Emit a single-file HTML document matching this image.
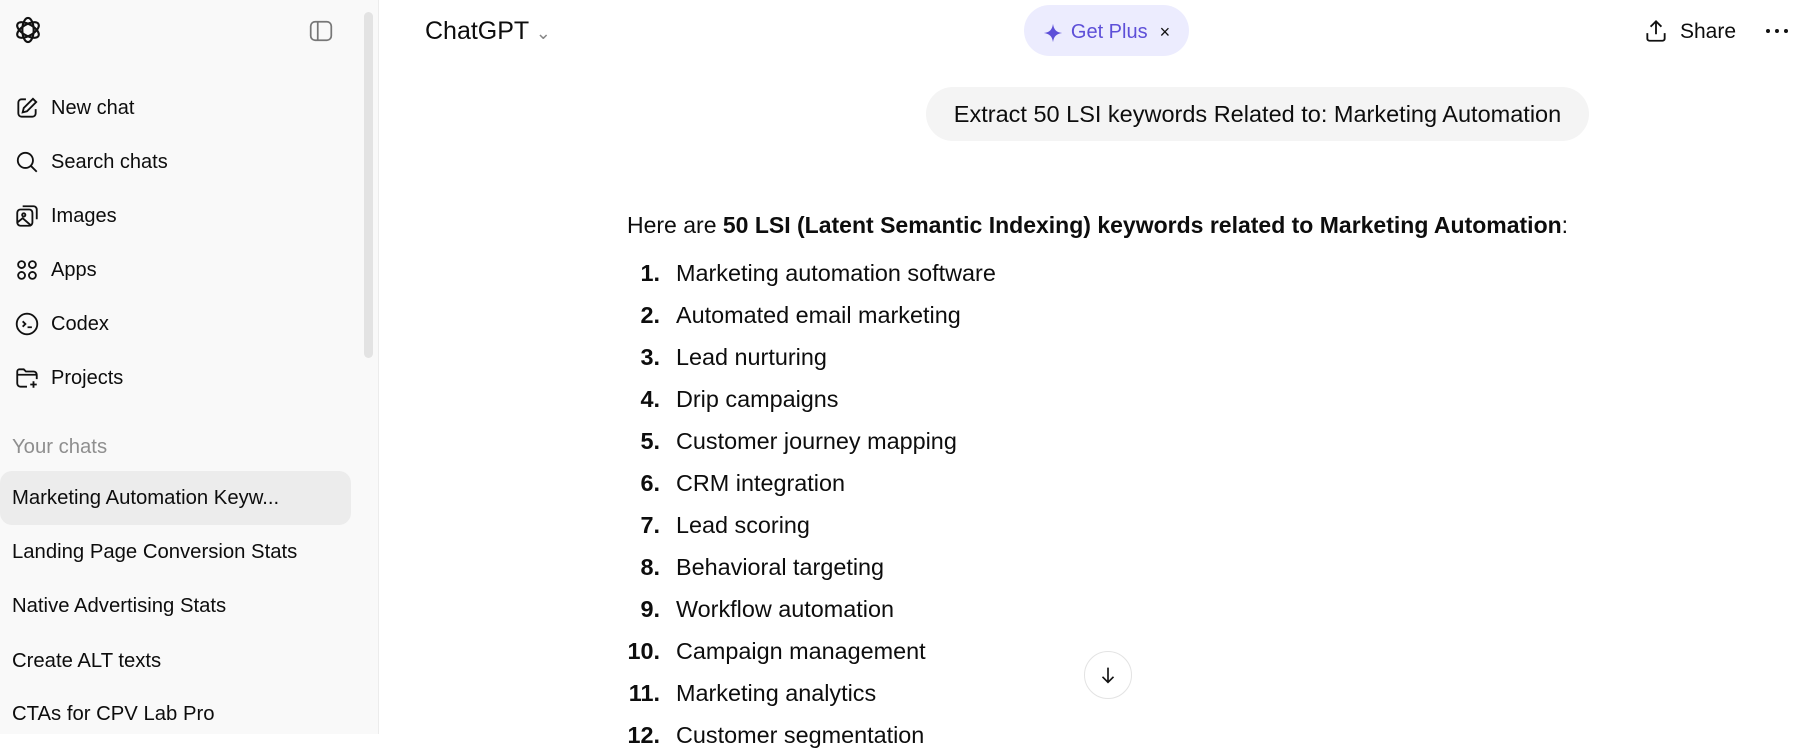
<!DOCTYPE html>
<html><head><meta charset="utf-8"><style>
*{margin:0;padding:0;box-sizing:border-box}
body{width:1800px;height:734px;overflow:hidden;background:#fff;font-family:"Liberation Sans",sans-serif;color:#0d0d0d;position:relative}
.sb{position:absolute;left:0;top:0;width:379px;height:734px;background:#f9f9f9;border-right:1px solid #ececec}
.scroll{position:absolute;left:364px;top:12px;width:9px;height:346px;background:#e3e3e3;border-radius:5px}
.abs{position:absolute}
.nav{position:absolute;left:14px;font-size:20px;display:flex;align-items:center;height:30px}
.nav svg{width:26px;height:26px;margin-right:11px}
.chat{position:absolute;left:12px;font-size:20.3px;white-space:nowrap}
.li{position:absolute;left:600px;font-size:23.4px;white-space:nowrap;height:30px}
.li b{display:inline-block;width:60px;text-align:right;margin-right:16px}
</style></head><body>
<div class="sb">
<svg class="abs" style="left:11px;top:13px" width="34" height="34" viewBox="0 0 24 24" fill="none" stroke="#111" stroke-width="1.5"><g transform="translate(12 12)"><ellipse rx="4" ry="8.5"/><ellipse rx="4" ry="8.5" transform="rotate(60)"/><ellipse rx="4" ry="8.5" transform="rotate(120)"/></g></svg>
<svg class="abs" style="left:308px;top:18px" width="26" height="26" viewBox="0 0 24 24" fill="none" stroke="#777" stroke-width="1.6"><rect x="2.5" y="3.5" width="19" height="17" rx="4"/><line x1="9" y1="4" x2="9" y2="20"/></svg>
<div class="nav" style="top:93px"><svg viewBox="0 0 24 24" fill="none" stroke="#111" stroke-width="1.7"><path d="M11 4H7a3 3 0 0 0-3 3v10a3 3 0 0 0 3 3h10a3 3 0 0 0 3-3v-4"/><path d="M17.5 3.5l3 3L12 15l-4 1 1-4z"/></svg>New chat</div>
<div class="nav" style="top:147px"><svg viewBox="0 0 24 24" fill="none" stroke="#111" stroke-width="1.7"><circle cx="10.5" cy="10.5" r="7"/><path d="M15.5 15.5L21 21"/></svg>Search chats</div>
<div class="nav" style="top:201px"><svg viewBox="0 0 24 24" fill="none" stroke="#111" stroke-width="1.7"><rect x="3" y="6" width="14" height="15" rx="3"/><path d="M8 3h10a3 3 0 0 1 3 3v9"/><circle cx="9" cy="11" r="1.5"/><path d="M3 18l5-4 8 7"/></svg>Images</div>
<div class="nav" style="top:255px"><svg viewBox="0 0 24 24" fill="none" stroke="#111" stroke-width="1.7"><circle cx="7" cy="7" r="3.2"/><circle cx="17" cy="7" r="3.2"/><circle cx="7" cy="17" r="3.2"/><circle cx="17" cy="17" r="3.2"/></svg>Apps</div>
<div class="nav" style="top:309px"><svg viewBox="0 0 24 24" fill="none" stroke="#111" stroke-width="1.7"><circle cx="12" cy="12" r="9.5"/><path d="M8 9.5l2.5 2.5L8 14.5M12.5 15h4"/></svg>Codex</div>
<div class="nav" style="top:363px"><svg viewBox="0 0 24 24" fill="none" stroke="#111" stroke-width="1.7"><path d="M12 20H6a3 3 0 0 1-3-3V6a2 2 0 0 1 2-2h4l2 2h7a3 3 0 0 1 3 3v4M3 9h18"/><path d="M18 15v6M15 18h6"/></svg>Projects</div>
<div class="chat" style="top:436px;color:#8f8f8f">Your chats</div>
<div class="abs" style="left:0;top:471px;width:351px;height:54px;background:#ececec;border-radius:12px"></div>
<div class="chat" style="top:487px">Marketing Automation Keyw...</div>
<div class="chat" style="top:541px">Landing Page Conversion Stats</div>
<div class="chat" style="top:595px">Native Advertising Stats</div>
<div class="chat" style="top:650px">Create ALT texts</div>
<div class="chat" style="top:703px">CTAs for CPV Lab Pro</div>
<div class="scroll"></div>
</div>
<div class="abs" style="left:425px;top:17px;font-size:25px">ChatGPT <span style="color:#888;font-size:18px">&#8964;</span></div>
<div class="abs" style="left:1024px;top:5px;width:165px;height:51px;border-radius:26px;background:#ececfe;color:#5d4fd8;font-size:20px;display:flex;align-items:center;justify-content:center;gap:8px;padding-top:4px"><svg width="20" height="20" viewBox="0 0 24 24" fill="#5d4fd8"><path d="M12 1C13 8 16 11 23 12 16 13 13 16 12 23 11 16 8 13 1 12 8 11 11 8 12 1z"/></svg>Get Plus <span style="color:#111;font-size:18px;margin-left:4px">&#215;</span></div>
<svg class="abs" style="left:1643px;top:18px" width="26" height="26" viewBox="0 0 24 24" fill="none" stroke="#111" stroke-width="1.7"><path d="M12 15V3M7 8l5-5 5 5M4 14v5a2 2 0 0 0 2 2h12a2 2 0 0 0 2-2v-5"/></svg>
<div class="abs" style="left:1680px;top:20px;font-size:21px">Share</div>
<svg class="abs" style="left:1765px;top:26px" width="24" height="10" viewBox="0 0 24 10" fill="#111"><circle cx="3" cy="5" r="2"/><circle cx="12" cy="5" r="2"/><circle cx="21" cy="5" r="2"/></svg>
<div class="abs" style="left:926px;top:87px;width:663px;height:54px;border-radius:27px;background:#f4f4f4;font-size:23.5px;display:flex;align-items:center;justify-content:center">Extract 50 LSI keywords Related to: Marketing Automation</div>
<div class="abs" style="left:627px;top:212px;font-size:23px;white-space:nowrap">Here are <b>50 LSI (Latent Semantic Indexing) keywords related to Marketing Automation</b>:</div>
<div class="li" style="top:260px"><b>1.</b>Marketing automation software</div>
<div class="li" style="top:302px"><b>2.</b>Automated email marketing</div>
<div class="li" style="top:344px"><b>3.</b>Lead nurturing</div>
<div class="li" style="top:386px"><b>4.</b>Drip campaigns</div>
<div class="li" style="top:428px"><b>5.</b>Customer journey mapping</div>
<div class="li" style="top:470px"><b>6.</b>CRM integration</div>
<div class="li" style="top:512px"><b>7.</b>Lead scoring</div>
<div class="li" style="top:554px"><b>8.</b>Behavioral targeting</div>
<div class="li" style="top:596px"><b>9.</b>Workflow automation</div>
<div class="li" style="top:638px"><b>10.</b>Campaign management</div>
<div class="li" style="top:680px"><b>11.</b>Marketing analytics</div>
<div class="li" style="top:722px"><b>12.</b>Customer segmentation</div>
<div class="abs" style="left:1084px;top:651px;width:48px;height:48px;border-radius:50%;background:#fff;border:1px solid #e3e3e3;display:flex;align-items:center;justify-content:center"><svg width="22" height="22" viewBox="0 0 24 24" fill="none" stroke="#111" stroke-width="1.8"><path d="M12 4v16M6 14l6 6 6-6"/></svg></div>
</body></html>
